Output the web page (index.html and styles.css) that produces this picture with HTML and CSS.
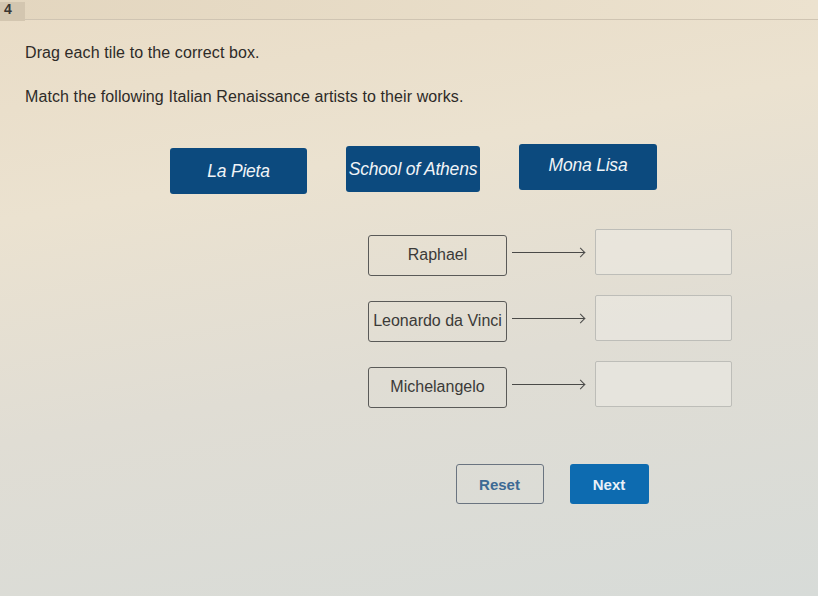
FILE: index.html
```html
<!DOCTYPE html>
<html lang="en">
<head>
<meta charset="UTF-8">
<meta name="viewport" content="width=device-width, initial-scale=1.0">
<title>Question 4</title>
<link rel="stylesheet" href="styles.css">
</head>
<body>
<div class="question-bar">
  <span class="question-num">4</span>
</div>

<div class="question">
  <p class="prompt">Drag each tile to the correct box.</p>
  <p class="prompt">Match the following Italian Renaissance artists to their works.</p>

  <div class="tiles">
    <div class="tile">La Pieta</div>
    <div class="tile tile-mid">School of Athens</div>
    <div class="tile tile-high">Mona Lisa</div>
  </div>

  <div class="matches">
    <div class="match-row">
      <div class="artist">Raphael</div>
      <span class="arrow"></span>
      <div class="drop-box"></div>
    </div>
    <div class="match-row">
      <div class="artist">Leonardo da Vinci</div>
      <span class="arrow"></span>
      <div class="drop-box"></div>
    </div>
    <div class="match-row">
      <div class="artist">Michelangelo</div>
      <span class="arrow"></span>
      <div class="drop-box"></div>
    </div>

    <div class="actions">
      <button class="btn btn-reset">Reset</button>
      <button class="btn btn-next">Next</button>
    </div>
  </div>
</div>
</body>
</html>
```

FILE: styles.css
```css
/* Page */
body {
    margin: 0;
    width: 818px;
    height: 596px;
    overflow: hidden;
    font-family: "Liberation Sans", Arial, sans-serif;
    color: #2e2b28;
    background: linear-gradient(170deg, #e9dcc6 0%, #ebe2d0 30%, #e0ddd4 60%, #d7dbd8 100%);
}

/* Question number strip */
.question-bar {
    height: 19px;
    border-bottom: 1px solid #cfc4b2;
    background: linear-gradient(90deg, #e3d6bf 0%, #ece2cf 100%);
}

.question-num {
    display: inline-block;
    width: 25px;
    height: 19px;
    padding-left: 4px;
    box-sizing: border-box;
    background-color: #d3c6b0;
    font-size: 14px;
    font-weight: bold;
    line-height: 14px;
    color: #3a3632;
}

.question {
    padding-left: 25px;
}

.prompt {
    margin: 24px 0 0;
    font-size: 16px;
    line-height: 18px;
    letter-spacing: 0.1px;
}

.prompt + .prompt {
    margin-top: 26px;
}

/* Draggable tiles */
.tiles {
    display: flex;
    gap: 39px;
    margin: 38px 0 0 145px;
    align-items: flex-start;
}

.tile {
    width: 137px;
    height: 46px;
    margin-top: 4px;
    border-radius: 3px;
    background-color: #0c4a7e;
    color: #f1f4f7;
    font-style: italic;
    font-size: 17.5px;
    display: flex;
    align-items: center;
    justify-content: center;
    letter-spacing: -0.2px;
}

.tile-mid {
    margin-top: 2px;
    width: 134px;
}

.tile-high {
    margin-top: 0;
    width: 138px;
    align-items: flex-start;
    padding-top: 11px;
    box-sizing: border-box;
}

/* Artist rows */
.matches {
    width: 366px;
    margin: 35px 0 0 343px;
}

.match-row {
    display: flex;
    align-items: center;
    height: 46px;
    margin-bottom: 20px;
}

.artist {
    width: 139px;
    height: 41px;
    box-sizing: border-box;
    border: 1px solid #5a5a58;
    border-radius: 3px;
    display: flex;
    align-items: center;
    justify-content: center;
    font-size: 16px;
    color: #3b3a38;
    margin-top: 6px;
}

.arrow {
    position: relative;
    width: 72px;
    height: 1px;
    margin: 0 11px 0 5px;
    background-color: #4a4a48;
}

.arrow::after {
    content: "";
    position: absolute;
    right: 0;
    top: -3px;
    width: 6px;
    height: 6px;
    border-top: 1px solid #4a4a48;
    border-right: 1px solid #4a4a48;
    transform: rotate(45deg);
}

.drop-box {
    width: 137px;
    height: 46px;
    box-sizing: border-box;
    border: 1px solid #bdbdb8;
    border-radius: 2px;
    background-color: rgba(238, 236, 230, 0.5);
}

/* Buttons */
.actions {
    display: flex;
    justify-content: center;
    gap: 26px;
    margin-top: 57px;
    padding-left: 2px;
}

.btn {
    height: 40px;
    border-radius: 3px;
    font-family: "Liberation Sans", Arial, sans-serif;
    font-size: 15px;
    font-weight: bold;
    cursor: pointer;
}

.btn-reset {
    width: 88px;
    background-color: transparent;
    border: 1px solid #6a7480;
    color: #3d6a94;
}

.btn-next {
    width: 79px;
    background-color: #0d6bb0;
    border: none;
    color: #e8f1f8;
}
```
